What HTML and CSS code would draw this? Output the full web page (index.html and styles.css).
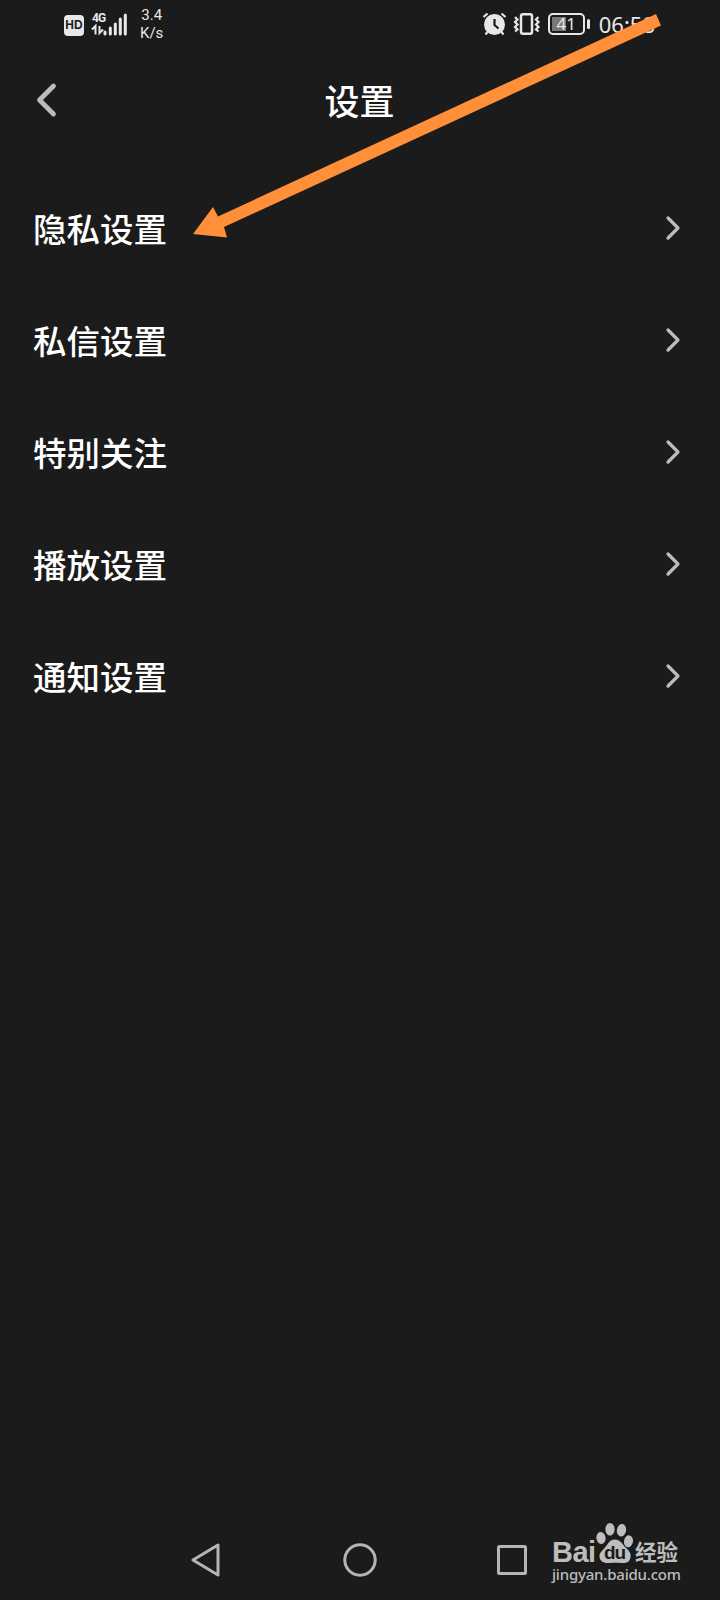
FILE: index.html
```html
<!DOCTYPE html>
<html lang="zh-CN">
<head>
<meta charset="utf-8">
<title>设置</title>
<link rel="stylesheet" href="styles.css">
</head>
<body>
<div class="screen">
  <div class="status">
    <div class="status-left">
      <span class="hd">HD</span>
      <div class="network">
        <span class="gen">4G</span>
        <svg class="signal" width="36" height="24" viewBox="0 0 36 24">
          <path d="M1 17.500l3.500-3.500v8.500M8.500 14v7l3.500-3.500" fill="none" stroke="#e8e8e8" stroke-width="2"/>
          <path d="M14 20v2M19.300 16v6M24.300 12v10M29.300 7v15M34.300 3v19" fill="none" stroke="#e8e8e8" stroke-width="3" stroke-linecap="round"/>
        </svg>
      </div>
      <div class="speed"><span>3.4</span><span>K/s</span></div>
    </div>
    <div class="status-right">
      <svg width="26" height="24" viewBox="0 0 26 24">
        <circle cx="12.500" cy="12.500" r="10.500" fill="#e8e8e8"/>
        <path d="M12.500 7v6l4 3.500" fill="none" stroke="#1b1b1b" stroke-width="2.200"/>
        <path d="M1.500 5l4-3.500M19.500 1.500l4 3.500M5.500 20l-2 2.500M19.500 20l2 2.500" fill="none" stroke="#e8e8e8" stroke-width="2.200"/>
      </svg>
      <svg class="vibrate" width="28" height="24" viewBox="0 0 28 24">
        <rect x="8" y="2.200" width="11" height="19.500" rx="2" fill="none" stroke="#e8e8e8" stroke-width="2.500"/>
        <path d="M2 5l2.500 2.500-2.500 2.500 2.500 2.500-2.500 2.500 2.500 2.500-2.500 2M25.500 5l-2.500 2.500 2.500 2.500-2.500 2.500 2.500 2.500-2.500 2.500 2.500 2" fill="none" stroke="#e8e8e8" stroke-width="2.200"/>
      </svg>
      <div class="battery"><span>41</span></div>
      <i class="battery-cap"></i>
      <span class="time">06:58</span>
    </div>
  </div>

  <header class="header">
    <svg class="back" width="24" height="38" viewBox="0 0 24 38"><path d="M18.500 5L4.500 19l14 14" fill="none" stroke="#bcbcbc" stroke-width="4.800" stroke-linecap="round" stroke-linejoin="round"/></svg>
    <h1>设置</h1>
  </header>

  <ul class="list">
    <li><span>隐私设置</span><svg class="chevron" viewBox="0 0 16 26"><path d="M3 3l10 10L3 23"/></svg></li>
    <li><span>私信设置</span><svg class="chevron" viewBox="0 0 16 26"><path d="M3 3l10 10L3 23"/></svg></li>
    <li><span>特别关注</span><svg class="chevron" viewBox="0 0 16 26"><path d="M3 3l10 10L3 23"/></svg></li>
    <li><span>播放设置</span><svg class="chevron" viewBox="0 0 16 26"><path d="M3 3l10 10L3 23"/></svg></li>
    <li><span>通知设置</span><svg class="chevron" viewBox="0 0 16 26"><path d="M3 3l10 10L3 23"/></svg></li>
  </ul>

  <nav class="nav">
    <svg width="34" height="36" viewBox="0 0 34 36"><path d="M27 3v30L2 18z"/></svg>
    <svg width="34" height="36" viewBox="0 0 34 36"><circle cx="17" cy="18" r="15.200"/></svg>
    <svg width="34" height="36" viewBox="0 0 34 36"><rect x="3.500" y="4.500" width="27" height="27" rx="1"/></svg>
  </nav>

  <div class="watermark">
    <div class="brand">
      <span class="bai">Bai</span>
      <span class="paw">
        <svg width="40" height="42" viewBox="0 0 40 42">
          <g fill="#bdbdbd">
            <ellipse cx="6" cy="16" rx="4.600" ry="6" transform="rotate(-10 6 16)"/>
            <ellipse cx="15" cy="7.300" rx="4.600" ry="6.300"/>
            <ellipse cx="26.500" cy="8.300" rx="4.600" ry="6.300" transform="rotate(10 26.500 8.300)"/>
            <ellipse cx="33.500" cy="19.300" rx="4.500" ry="6" transform="rotate(10 33.500 19.300)"/>
            <path d="M20 17.500c5 0 7 4 10 7.500 3 3 6.500 5.500 5.500 10.500-1 5-5 6-9.500 5.500-4-.5-7-.5-11 0-5 .5-10-1-10.500-6-.3-4.500 3-6.500 6-10 3-4 4.500-7.500 9.500-7.500z"/>
          </g>
        </svg>
        <b>du</b>
      </span>
      <span class="jy">经验</span>
    </div>
    <div class="url">jingyan.baidu.com</div>
  </div>

  <svg class="arrow" width="720" height="250" viewBox="0 0 720 250"><path d="M193 234l20-27 5 9.500L656 14l5 11.500L224 227l3 10.500z" fill="#ff8f38"/></svg>
</div>
</body>
</html>
```
FILE: styles.css
```css
* { box-sizing: border-box; }
body { margin: 0; background: #1b1b1b; }
.screen {
  position: relative;
  display: flex;
  flex-direction: column;
  width: 720px;
  height: 1600px;
  overflow: hidden;
  background: #1b1b1b;
  color: #fff;
  font-family: "KaiTi", "STKaiti", "Noto Sans CJK SC", sans-serif;
}
svg { display: block; flex: none; }

.status {
  display: flex;
  justify-content: space-between;
  height: 48px;
  padding: 0 65px 0 64px;
  color: #e8e8e8;
  font-family: "Noto Sans", sans-serif;
}
.status-left, .status-right { display: flex; align-items: center; }
.hd {
  width: 20px;
  height: 21px;
  margin-top: 2px;
  border-radius: 4px;
  background: #e8e8e8;
  color: #1b1b1b;
  font: bold 12px/21px "Liberation Sans", sans-serif;
  text-align: center;
}
.network { position: relative; width: 36px; margin-left: 7px; }
.gen {
  position: absolute;
  left: 1px;
  top: 0;
  font: bold 12px/12px "Roboto", sans-serif;
  letter-spacing: -1px;
}
.speed {
  display: flex;
  flex-direction: column;
  margin-left: 13px;
  font: 15px/18px "Roboto", sans-serif;
  text-align: center;
}
.vibrate { margin-left: 5px; }
.battery {
  width: 37px;
  height: 22px;
  margin-left: 7px;
  border: 2px solid #e8e8e8;
  border-radius: 5px;
  background: linear-gradient(#777, #777) 2px 2px / 14px 14px no-repeat;
  font-size: 17px;
  line-height: 18px;
  text-align: center;
}
.battery-cap { width: 3px; height: 10px; margin-left: 2px; border-radius: 2px; background: #e8e8e8; }
.time { margin-left: 9px; font-size: 22px; line-height: 50px; }

.header {
  display: flex;
  align-items: center;
  height: 104px;
  padding-left: 35px;
}
.header h1 {
  flex: 1;
  margin: 0 60px 0 0;
  font-size: 35px;
  font-weight: 500;
  line-height: 48px;
  text-align: center;
}

.list { margin: 20px 0 0; padding: 0; list-style: none; }
.list li {
  display: flex;
  align-items: center;
  justify-content: space-between;
  height: 112px;
  padding: 0 39px 0 33px;
  font-size: 33.500px;
  font-weight: 500;
  line-height: 48px;
}
.list span { margin-top: -1px; }
.chevron { width: 16px; height: 26px; }
.chevron path { fill: none; stroke: #bcbcbc; stroke-width: 3.200; stroke-linecap: round; stroke-linejoin: round; }

.nav {
  display: flex;
  gap: 118px;
  margin-top: auto;
  padding: 0 0 22px 191px;
}
.nav path, .nav circle, .nav rect { fill: none; stroke: #b5b5b5; stroke-width: 3; stroke-linejoin: round; }

.watermark { position: absolute; left: 552px; top: 1522px; color: #bdbdbd; }
.brand { display: flex; align-items: flex-end; height: 42px; }
.bai { width: 43px; font: bold 29px/24px "Liberation Sans", sans-serif; letter-spacing: -0.500px; }
.paw { position: relative; }
.paw b {
  position: absolute;
  left: 9px;
  top: 21px;
  color: #1b1b1b;
  font: bold 19px/20px "Liberation Sans", sans-serif;
  letter-spacing: -1px;
}
.jy { font: bold 21.500px/26px "Noto Sans CJK SC", sans-serif; }
.url { font: 500 15px/20px "Noto Sans", sans-serif; letter-spacing: -0.200px; }

.arrow { position: absolute; left: 0; top: 0; }
```
